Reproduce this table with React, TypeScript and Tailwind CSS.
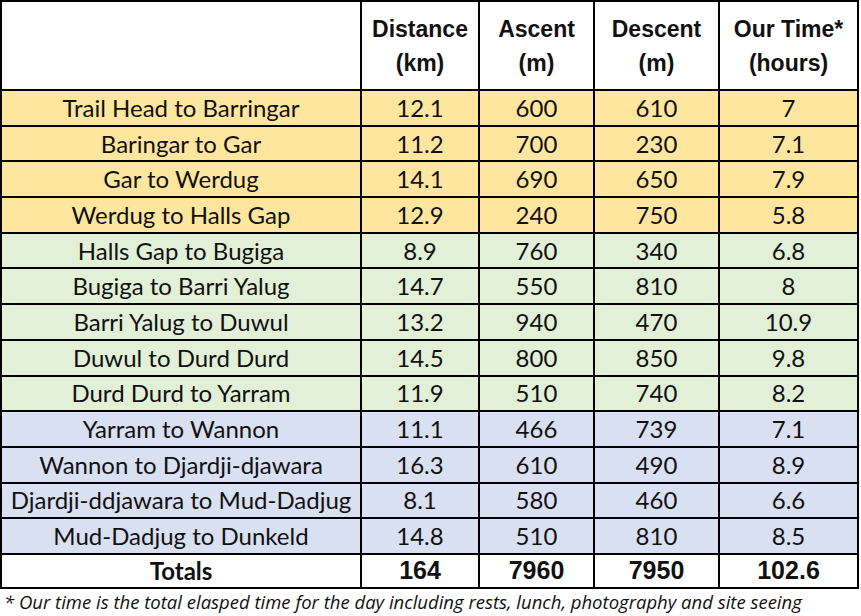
import React from "react";

type Leg = { name: string; dist: string; up: string; down: string; time: string };

const YELLOW = "bg-[#ffe69f]";
const GREEN = "bg-[#e1f0d7]";
const BLUE = "bg-[#d9e0f1]";

const LEGS: { bg: string; legs: Leg[] }[] = [
  {
    bg: YELLOW,
    legs: [
      { name: "Trail Head to Barringar", dist: "12.1", up: "600", down: "610", time: "7" },
      { name: "Baringar to Gar", dist: "11.2", up: "700", down: "230", time: "7.1" },
      { name: "Gar to Werdug", dist: "14.1", up: "690", down: "650", time: "7.9" },
      { name: "Werdug to Halls Gap", dist: "12.9", up: "240", down: "750", time: "5.8" },
    ],
  },
  {
    bg: GREEN,
    legs: [
      { name: "Halls Gap to Bugiga", dist: "8.9", up: "760", down: "340", time: "6.8" },
      { name: "Bugiga to Barri Yalug", dist: "14.7", up: "550", down: "810", time: "8" },
      { name: "Barri Yalug to Duwul", dist: "13.2", up: "940", down: "470", time: "10.9" },
      { name: "Duwul to Durd Durd", dist: "14.5", up: "800", down: "850", time: "9.8" },
      { name: "Durd Durd to Yarram", dist: "11.9", up: "510", down: "740", time: "8.2" },
    ],
  },
  {
    bg: BLUE,
    legs: [
      { name: "Yarram to Wannon", dist: "11.1", up: "466", down: "739", time: "7.1" },
      { name: "Wannon to Djardji-djawara", dist: "16.3", up: "610", down: "490", time: "8.9" },
      { name: "Djardji-ddjawara to Mud-Dadjug", dist: "8.1", up: "580", down: "460", time: "6.6" },
      { name: "Mud-Dadjug to Dunkeld", dist: "14.8", up: "510", down: "810", time: "8.5" },
    ],
  },
];

// body text stands in for Aptos, headers and totals for Arial
const body = "font-['Lato','Noto_Sans',sans-serif] text-[24px] leading-none text-[#111]";
const head = "font-['Liberation_Sans','Arial',sans-serif] font-bold text-[23px] leading-[34px] text-[#111]";
const total = "font-['Liberation_Sans','Arial',sans-serif] font-bold text-[25px] leading-none text-[#111]";

function Cell({ bg, className, children }: { bg: string; className?: string; children?: React.ReactNode }) {
  return <div className={`${bg} flex items-center justify-center text-center ${className ?? ""}`}>{children}</div>;
}

export default function App() {
  return (
    <div className="w-[861px] h-[616px] bg-white overflow-hidden">
      <div className="w-[859px] border-2 border-black bg-black grid grid-cols-[358px_116px_113px_123px_137px] gap-[2px]">
        <Cell bg="bg-white" className="h-[87px]" />
        <Cell bg="bg-white" className={head}>
          <span>Distance<br />(km)</span>
        </Cell>
        <Cell bg="bg-white" className={head}>
          <span>Ascent<br />(m)</span>
        </Cell>
        <Cell bg="bg-white" className={head}>
          <span>Descent<br />(m)</span>
        </Cell>
        <Cell bg="bg-white" className={head}>
          <span>Our Time*<br />(hours)</span>
        </Cell>

        {LEGS.flatMap((group) =>
          group.legs.map((leg) => (
            <React.Fragment key={leg.name}>
              <Cell bg={group.bg} className={`${body} h-[33.7px]`}>{leg.name}</Cell>
              <Cell bg={group.bg} className={body}>{leg.dist}</Cell>
              <Cell bg={group.bg} className={body}>{leg.up}</Cell>
              <Cell bg={group.bg} className={body}>{leg.down}</Cell>
              <Cell bg={group.bg} className={body}>{leg.time}</Cell>
            </React.Fragment>
          ))
        )}

        <Cell bg="bg-white" className={`${body} text-[24.5px] font-bold h-[32px]`}>Totals</Cell>
        <Cell bg="bg-white" className={total}>164</Cell>
        <Cell bg="bg-white" className={total}>7960</Cell>
        <Cell bg="bg-white" className={total}>7950</Cell>
        <Cell bg="bg-white" className={total}>102.6</Cell>
      </div>
      <p className="pl-[4px] font-['Open_Sans','Lato',sans-serif] italic text-[18.5px] leading-[26px] text-[#111] whitespace-nowrap">
        * Our time is the total elasped time for the day including rests, lunch, photography and site seeing
      </p>
    </div>
  );
}
